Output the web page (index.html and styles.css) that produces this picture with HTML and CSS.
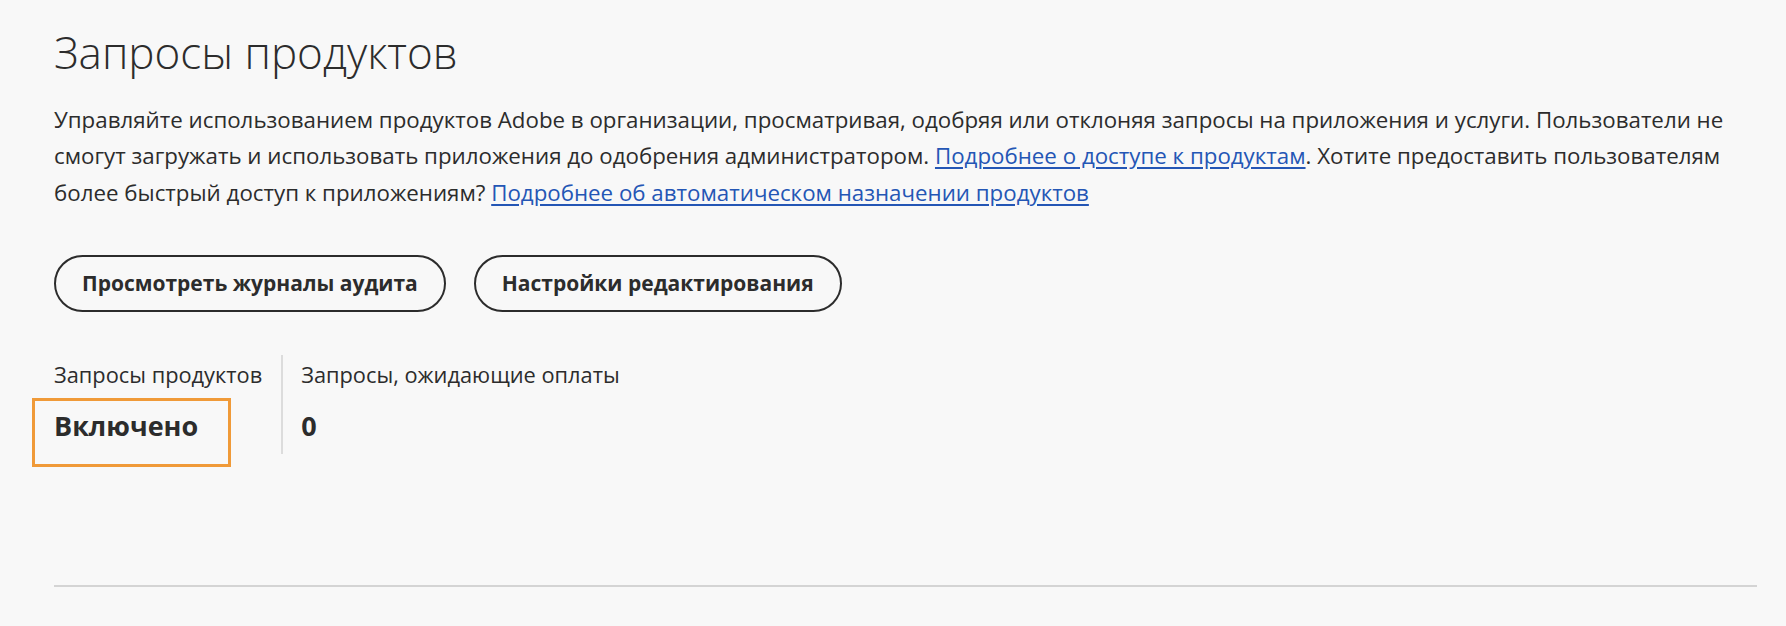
FILE: index.html
```html
<!DOCTYPE html>
<html lang="ru">
<head>
<meta charset="utf-8">
<title>Запросы продуктов</title>
<link rel="stylesheet" href="styles.css">
</head>
<body>
<main class="page">
  <h1 class="title">Запросы продуктов</h1>
  <p class="intro">Управляйте использованием продуктов Adobe в организации, просматривая, одобряя или отклоняя запросы на приложения и услуги. Пользователи не смогут загружать и использовать приложения до одобрения администратором. <a href="#" class="link">Подробнее о доступе к продуктам</a>. Хотите предоставить пользователям более быстрый доступ к приложениям? <a href="#" class="link">Подробнее об автоматическом назначении продуктов</a></p>
  <div class="actions">
    <button class="btn" type="button">Просмотреть журналы аудита</button>
    <button class="btn" type="button">Настройки редактирования</button>
  </div>
  <div class="stats">
    <div class="stat stat-first">
      <div class="stat-label">Запросы продуктов</div>
      <div class="stat-value highlighted">Включено</div>
    </div>
    <div class="stat">
      <div class="stat-label">Запросы, ожидающие оплаты</div>
      <div class="stat-value">0</div>
    </div>
  </div>
  <hr class="rule">
</main>
</body>
</html>
```
FILE: styles.css
```css
html, body {
  margin: 0;
  padding: 0;
  background: #f8f8f8;
}
body {
  font-family: "Open Sans", "Liberation Sans", sans-serif;
  color: #2c2c2c;
}
.page {
  padding: 22px 29px 0 54px;
}
.title {
  margin: 0;
  font-size: 44px;
  font-weight: 300;
  line-height: 60px;
  letter-spacing: 0;
  color: #2c2c2c;
}
.intro {
  margin: 19.5px 0 0;
  max-width: 1680px;
  font-size: 22.3px;
  line-height: 36.5px;
}
.link {
  color: #2456b5;
  text-decoration: underline;
  text-underline-offset: 3px;
}
.actions {
  display: flex;
  gap: 28px;
  margin-top: 43.5px;
}
.btn {
  box-sizing: border-box;
  height: 57px;
  padding: 0 26px;
  border: 2px solid #2c2c2c;
  border-radius: 999px;
  background: transparent;
  font-family: "Open Sans", "Liberation Sans", sans-serif;
  font-size: 21px;
  font-weight: 700;
  color: #2c2c2c;
}
.stats {
  display: flex;
  margin-top: 43px;
}
.stat {
  padding: 3px 0 10px 0;
}
.stat-first {
  padding-right: 19px;
  margin-right: 18px;
  border-right: 2px solid #dcdcdc;
}
.stat-label {
  font-size: 21.8px;
  line-height: 33.5px;
}
.stat-value {
  margin-top: 17px;
  font-size: 27px;
  font-weight: 700;
  line-height: 36px;
}
.highlighted {
  position: relative;
}
.highlighted::after {
  content: "";
  position: absolute;
  left: -22px;
  top: -10px;
  width: 193px;
  height: 63px;
  border: 3px solid #f09a38;
}
.rule {
  margin: 131px 0 0;
  height: 2px;
  border: 0;
  background: #d4d4d4;
}
```
